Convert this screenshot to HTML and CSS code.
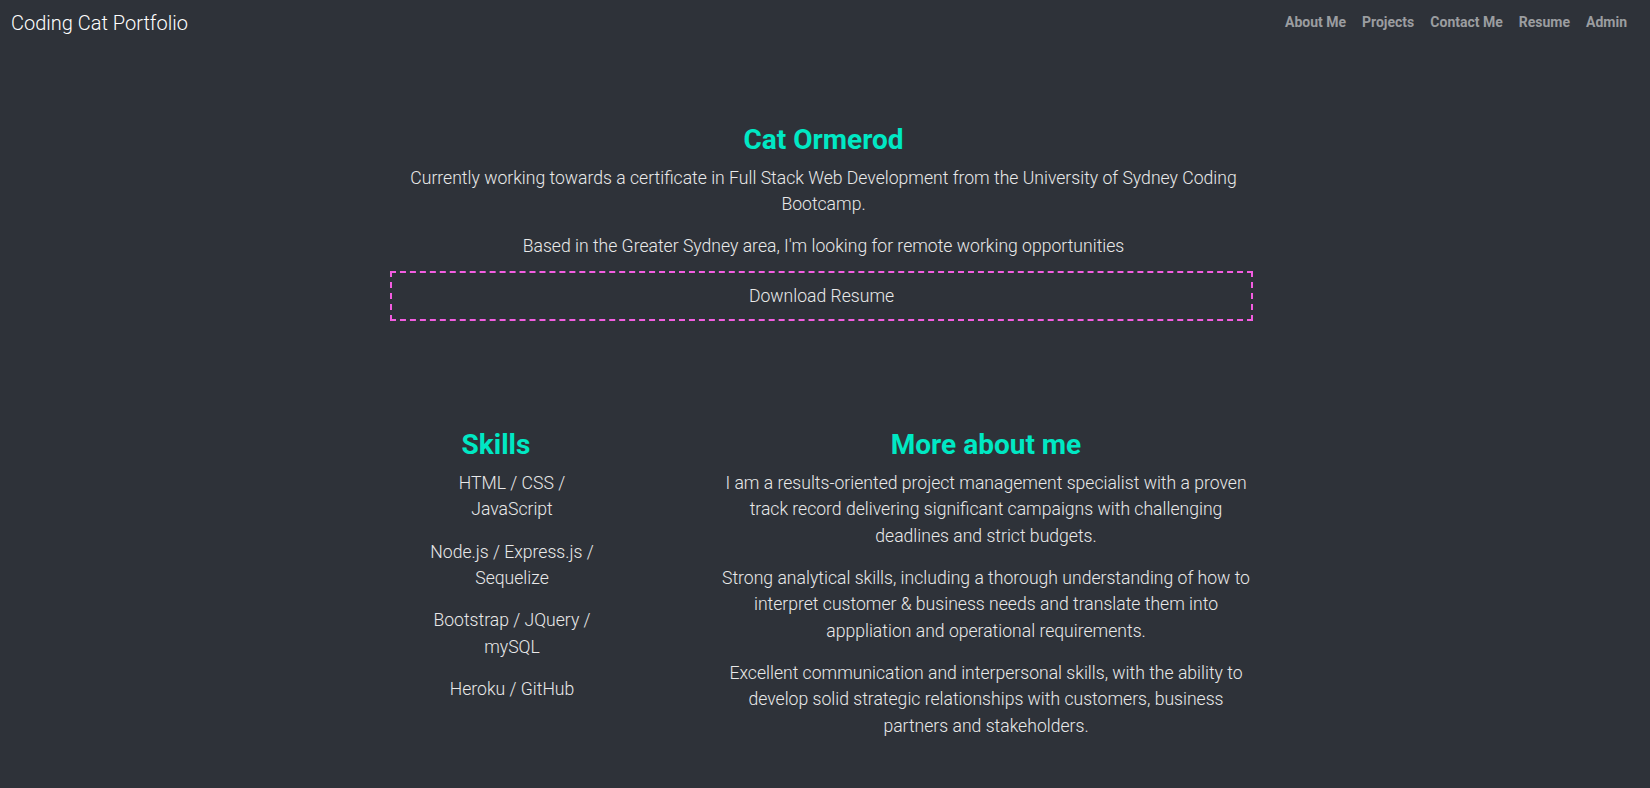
FILE: index.html
```html
<!DOCTYPE html>
<html lang="en">
<head>
<meta charset="utf-8">
<title>Coding Cat Portfolio</title>
<link rel="stylesheet" href="styles.css">
</head>
<body>
<nav class="navbar">
  <a class="brand" href="#">Coding Cat Portfolio</a>
  <ul class="nav">
    <li><a class="nav-link" href="#">About Me</a></li>
    <li><a class="nav-link" href="#">Projects</a></li>
    <li><a class="nav-link" href="#">Contact Me</a></li>
    <li><a class="nav-link" href="#">Resume</a></li>
    <li><a class="nav-link" href="#">Admin</a></li>
  </ul>
</nav>
<main class="main">
  <section class="hero">
    <h3 class="title">Cat Ormerod</h3>
    <p class="text">Currently working towards a certificate in Full Stack Web Development from the University of Sydney Coding Bootcamp.</p>
    <p class="text">Based in the Greater Sydney area, I'm looking for remote working opportunities</p>
    <a class="download" href="#">Download Resume</a>
  </section>
  <section class="info">
    <div class="skills">
      <h3 class="title">Skills</h3>
      <div class="skill-list">
        <p class="text">HTML / CSS / JavaScript</p>
        <p class="text">Node.js / Express.js / Sequelize</p>
        <p class="text">Bootstrap / JQuery / mySQL</p>
        <p class="text">Heroku / GitHub</p>
      </div>
    </div>
    <div class="about">
      <h3 class="title">More about me</h3>
      <p class="text">I am a results-oriented project management specialist with a proven track record delivering significant campaigns with challenging deadlines and strict budgets.</p>
      <p class="text">Strong analytical skills, including a thorough understanding of how to interpret customer &amp; business needs and translate them into apppliation and operational requirements.</p>
      <p class="text">Excellent communication and interpersonal skills, with the ability to develop solid strategic relationships with customers, business partners and stakeholders.</p>
    </div>
  </section>
</main>
</body>
</html>
```
FILE: styles.css
```css
* { box-sizing: border-box; }
html, body { margin: 0; padding: 0; }
body {
  background: #2e3239;
  color: #e9e9e9;
  font-family: Roboto, "Liberation Sans", sans-serif;
  font-weight: 300;
  font-size: 17.6px;
  line-height: 1.5;
  min-height: 788px;
}
a { text-decoration: none; }
.navbar {
  display: flex;
  align-items: center;
  justify-content: space-between;
  padding: 4px 15px 8px 11px;
}
.brand {
  color: #ffffff;
  font-size: 20px;
  font-weight: 300;
  line-height: 30px;
}
.nav {
  display: flex;
  list-style: none;
  margin: 0;
  padding: 0;
}
.nav-link {
  display: block;
  padding: 8px;
  color: #9b9da0;
  font-size: 14px;
  font-weight: 700;
  line-height: 21px;
}
.main {
  width: 870px;
  margin-left: calc(50% - 435px);
  padding-top: 74px;
}
.hero {
  width: 867px;
  text-align: center;
}
.title {
  margin: 0 0 8px;
  color: #00e8c4;
  font-size: 28px;
  font-weight: 700;
  line-height: 1.2;
}
.text {
  margin: 0 0 16px;
}
.download {
  display: block;
  margin: -5px 4px 0 0;
  padding: 10px 0;
  border: 2px dashed #f35de1;
  color: #e9e9e9;
  text-align: center;
}
.info {
  display: flex;
  align-items: flex-start;
  margin-top: 107px;
  text-align: center;
}
.skills {
  width: 212px;
}
.skill-list {
  width: 180px;
  margin-left: 32px;
}
.about {
  width: 536px;
  margin-left: 116px;
}
```
